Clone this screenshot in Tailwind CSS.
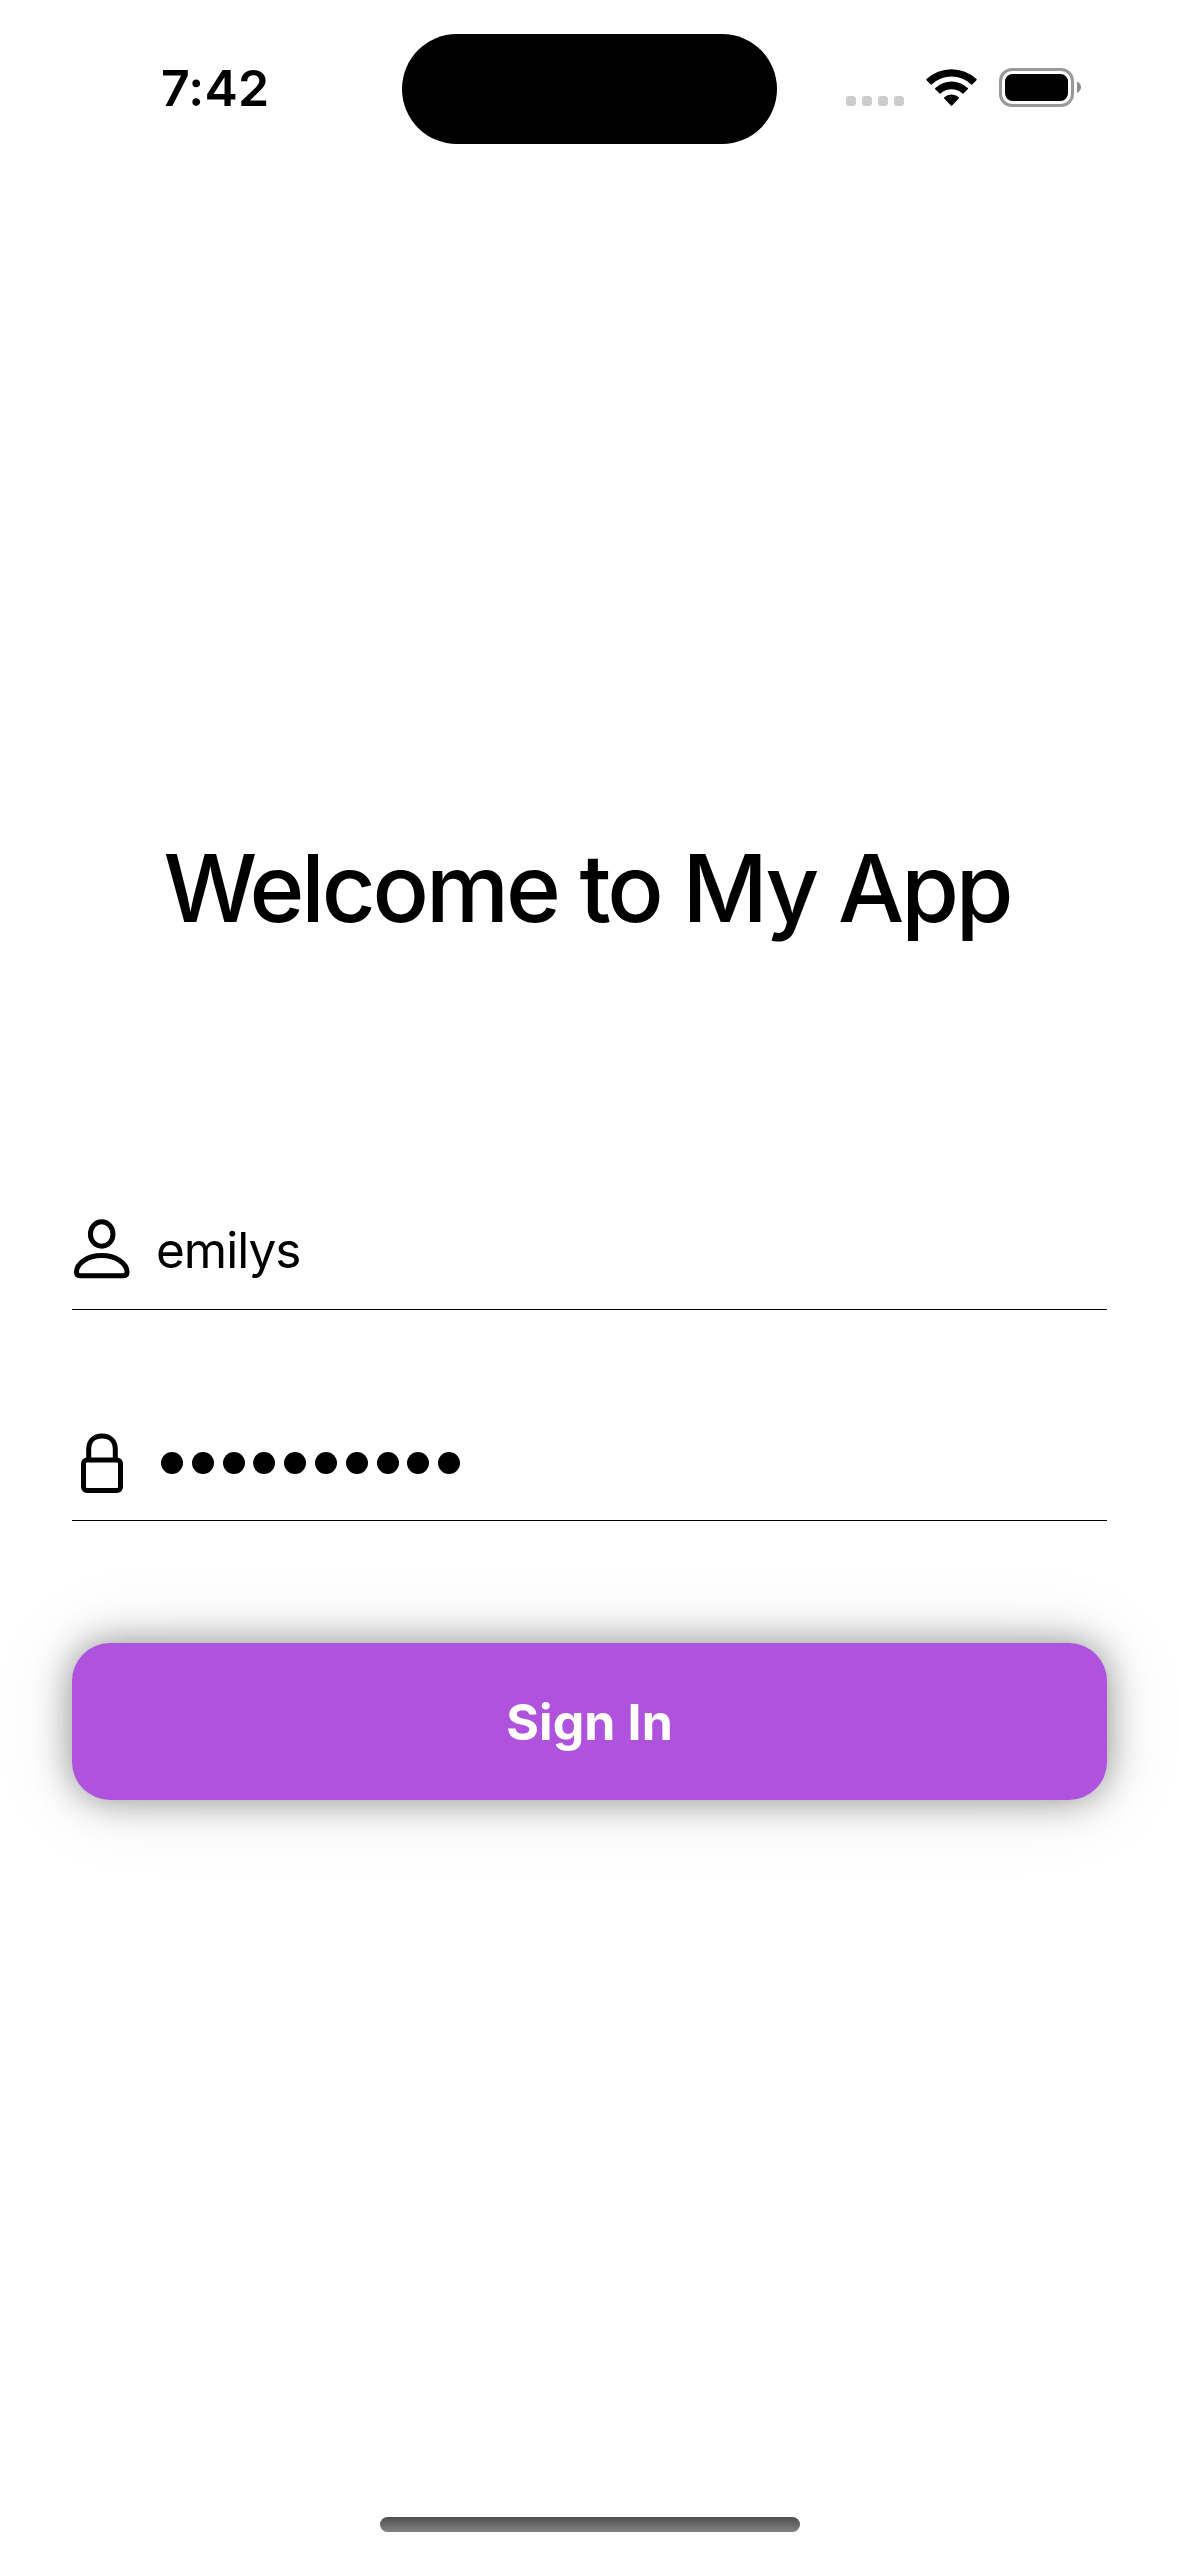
<!DOCTYPE html>
<html lang="en">
<head>
<meta charset="utf-8">
<title>Sign In</title>
<script src="https://cdn.jsdelivr.net/npm/@tailwindcss/browser@4"></script>
</head>
<body class="bg-white">
<div class="flex h-[2556px] w-[1179px] flex-col overflow-hidden bg-white font-['Inter',sans-serif] text-black">
  <!-- Status bar -->
  <header class="flex h-[178px] shrink-0 items-start pt-[34px]">
    <div class="flex h-[110px] w-[402px] items-center pb-[2px] pl-[161px]">
      <span class="text-[50px] leading-[60px] font-semibold tracking-[0.2px]">7:42</span>
    </div>
    <div class="h-[110px] w-[375px] rounded-full bg-black"></div>
    <svg class="ml-[69px] mt-[32px]" width="236" height="42" viewBox="846 66 236 42">
      <g fill="#ccc">
        <rect x="846" y="96" width="10" height="10" rx="3"/>
        <rect x="862" y="96" width="10" height="10" rx="3"/>
        <rect x="878" y="96" width="10" height="10" rx="3"/>
        <rect x="894" y="96" width="10" height="10" rx="3"/>
      </g>
      <path d="M926.6 79A36.500 36.500 0 0 1 976.400 79Q977 79.600 976.500 80.200L972.200 84.400Q971.600 84.900 971 84.300A28.500 28.500 0 0 0 932 84.300Q931.400 84.900 930.800 84.400L926.500 80.200Q926 79.600 926.600 79Z"/>
      <path d="M935.300 88A23.500 23.500 0 0 1 967.700 88Q968.300 88.600 967.800 89.200L963.400 93.400Q962.800 93.900 962.200 93.300A15.800 15.800 0 0 0 940.800 93.300Q940.200 93.900 939.600 93.400L935.200 89.200Q934.700 88.600 935.300 88Z"/>
      <path d="M944.300 97.300A10.800 10.800 0 0 1 958.700 97.300Q959.300 98 958.800 98.500L952.100 105.500Q951.500 106.100 950.900 105.500L944.200 98.500Q943.700 98 944.300 97.300Z"/>
      <rect x="1000.5" y="69.5" width="72" height="36" rx="11.5" fill="none" stroke="#999" stroke-width="3"/>
      <rect x="1005" y="74" width="63" height="27" rx="7.5"/>
      <path d="M1077 81.5Q1081 83.5 1081 87.3Q1081 91 1077 93Z" fill="#8c8c8c"/>
    </svg>
  </header>

  <main class="flex flex-col px-[72px] pt-[650px]">
    <h1 class="h-[120px] pr-[5px] text-center text-[93.5px] leading-[120px] font-medium tracking-[-3.1px] whitespace-nowrap">Welcome to My App</h1>

    <div class="mt-[242px] flex h-[120px] items-center border-b border-black">
      <svg class="shrink-0" width="60" height="64" viewBox="72 1217.5 60 64" fill="none" stroke="#000" stroke-width="5">
        <ellipse cx="101.7" cy="1233.5" rx="11.3" ry="12.2"/>
        <path d="M80 1275.2H123.500Q127 1275.200 127 1271.500C127 1263 116 1255 101.700 1255S76.500 1263 76.500 1271.500Q76.500 1275.200 80 1275.200Z"/>
      </svg>
      <span class="ml-[24px] text-[49.5px] leading-[60px] tracking-[-1px]">emilys</span>
    </div>

    <div class="mt-[91px] flex h-[120px] items-center border-b border-black pt-[4px]">
      <svg class="shrink-0" width="60" height="64" viewBox="72 1430.5 60 64" fill="none" stroke="#000" stroke-width="5">
        <path d="M88.700 1459V1449C88.700 1440.500 94 1435.500 102 1435.500S115.300 1440.500 115.300 1449V1459"/>
        <rect x="83.500" y="1459.500" width="37" height="30.500" rx="3.500"/>
      </svg>
      <div class="ml-[29px] flex gap-[8.8px]" role="img" aria-label="Password">
        <span class="size-[22px] rounded-full bg-black"></span>
        <span class="size-[22px] rounded-full bg-black"></span>
        <span class="size-[22px] rounded-full bg-black"></span>
        <span class="size-[22px] rounded-full bg-black"></span>
        <span class="size-[22px] rounded-full bg-black"></span>
        <span class="size-[22px] rounded-full bg-black"></span>
        <span class="size-[22px] rounded-full bg-black"></span>
        <span class="size-[22px] rounded-full bg-black"></span>
        <span class="size-[22px] rounded-full bg-black"></span>
        <span class="size-[22px] rounded-full bg-black"></span>
      </div>
    </div>

    <button class="mt-[122px] h-[157px] rounded-[38px] bg-[#af52de] text-[50px] leading-[60px] font-bold tracking-[0.1px] text-white shadow-[0_0_36px_rgba(0,0,0,0.4),0_0_86px_rgba(0,0,0,0.1)]">Sign In</button>
  </main>

  <!-- Home indicator -->
  <div class="mx-auto mt-auto mb-[24px] h-[15px] w-[420px] shrink-0 rounded-full bg-linear-to-b from-[#505050] to-[#828282]"></div>
</div>
</body>
</html>
